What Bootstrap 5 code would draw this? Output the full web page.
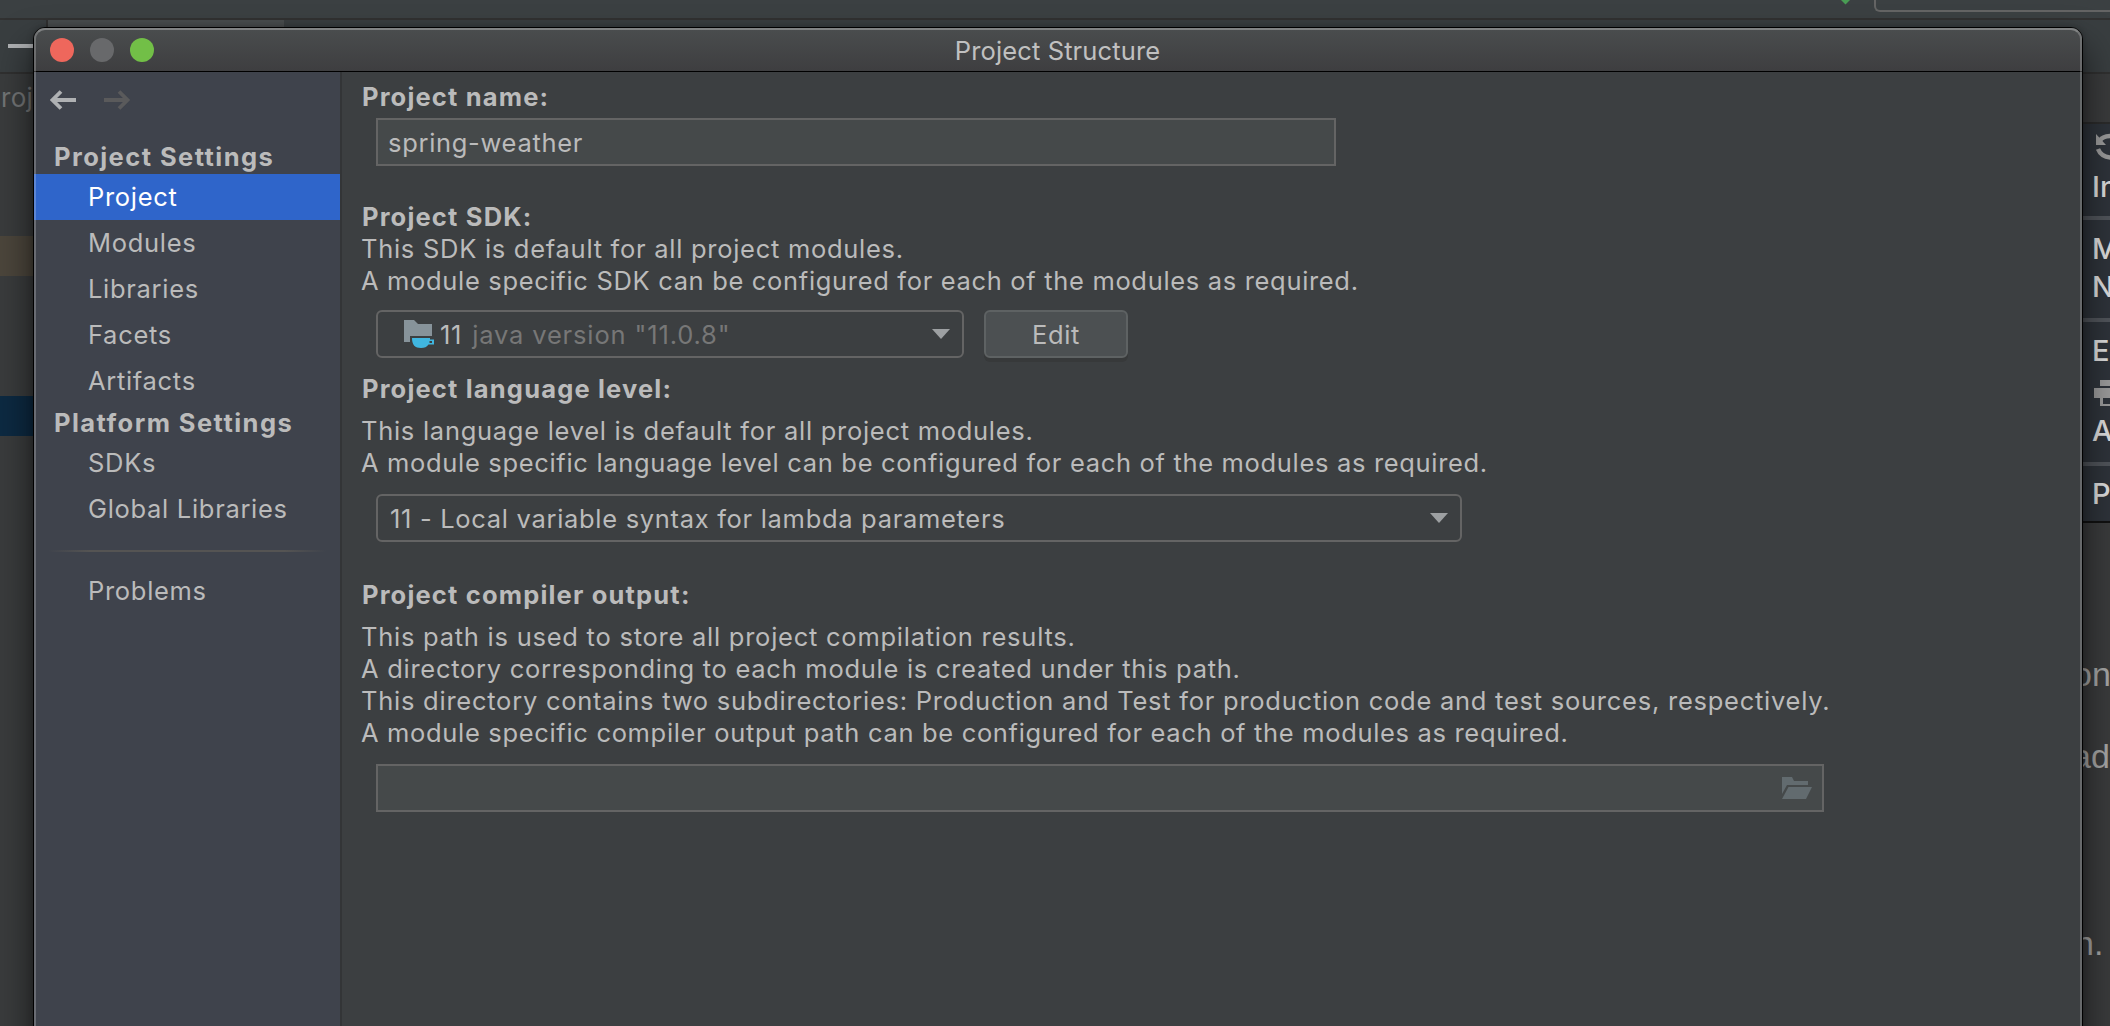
<!DOCTYPE html>
<html lang="en" data-bs-theme="dark">
<head>
<meta charset="utf-8">
<title>Project Structure</title>
<link href="https://cdn.jsdelivr.net/npm/bootstrap@5.3.0/dist/css/bootstrap.min.css" rel="stylesheet">
<style>
body{width:2110px;height:1026px;overflow:hidden;background:#3a3d3e;color:#bbb;font-family:Inter,"Liberation Sans",sans-serif;font-size:25.5px;line-height:32px;letter-spacing:.69px}
svg{display:block;flex:none}
/* IDE behind the dialog */
.ide{height:1026px}
.ide-tools{height:20px;background:#3b4042;border-bottom:2px solid #313131}
.ide-tools .run-tip{margin-left:1841px}
.ide-tools .run-box{width:260px;height:12px;margin-left:24px;border:2px solid #646464;border-top:0;border-right:0;border-radius:0 0 0 6px}
.ide-tabs{height:54px;background:#393e40;border-bottom:2px solid #303030}
.ide-tabs .first{width:46px;padding:24px 0 0 8px}
.ide-tabs .first i{display:block;width:26px;height:4px;background:#afb1b3}
.ide-tabs .tab-open{width:238px;background:#484c4d;border-left:2px solid #303030}
.strip-l{width:60px;background:#3a3c3d}
.tree-title{height:162px;padding:8px 0 0 1px;color:#737576;letter-spacing:.3px;font-size:26px}
.mod{height:40px;background:#4c463c}
.gap-rows{height:120px}
.sel{height:40px;background:#0d2a42}
.strip-r{width:60px;background:#3a3b3c}
.popup{height:401px;margin-top:48px;background:#2e333a;border-top:2px solid #2b2b2b;border-bottom:2px solid #111;color:#dcdcdc;font-size:29px;letter-spacing:0;padding-left:42px;font-weight:500}
.popup hr{margin:0 0 0 -42px;border:0;height:4px;background:#50545a;opacity:1;flex:none}
.popup div{height:48px;line-height:38px;flex:none}
.popup .r2{line-height:57px}
.popup .r3{height:50px;line-height:37px}
.popup .r4{height:52px;line-height:57px}
.popup .r5{height:54px;line-height:46px}
.popup .r6{height:52px;line-height:55px}
.doc{color:#a6a6a6;font-family:"Liberation Sans",sans-serif;font-size:34px;letter-spacing:0;padding-top:131px}
.doc div{height:82px;line-height:40px}
/* dialog */
.dialog-win{left:33px;top:27px;width:2050px;height:1040px;border:1px solid #000;border-radius:12px 12px 0 0;background:#3c3f41;box-shadow:0 22px 34px 4px rgba(0,0,0,.5),0 0 6px rgba(0,0,0,.25)}
.dialog-win::after{content:"";position:absolute;inset:0;border:2px solid rgba(255,255,255,.22);border-top-color:rgba(255,255,255,.3);border-radius:11px 11px 0 0;pointer-events:none}
.title-row{height:44px;border-bottom:1px solid #000;background:linear-gradient(#4a4d4e,#3e3e40);border-radius:11px 11px 0 0;padding:2px 1px 0 0;letter-spacing:.12px;color:#c0c0c0}
.lights{left:16px;top:10px;gap:16px}
.lights i{width:24px;height:24px;border-radius:50%}
.side{width:308px;background:#3f434c;border-right:2px solid #333537}
.nav-arrows{height:66px;padding:18px 0 0 16px;gap:27px}
.side-head{height:36px;line-height:37px;padding-left:20px;font-weight:700;letter-spacing:1.44px}
.side-item{height:46px;line-height:46px;padding-left:54px}
.side-item.on{background:#2f65ca;color:#fff}
.side-sep{height:2px;margin:18px 14px 16px;background:linear-gradient(90deg,transparent,#555453 15%,#555453 85%,transparent)}
.main-col{padding:9px 0 0 19px}
.head-b{font-weight:700;letter-spacing:1.17px;padding-left:1px}
.ls-a{letter-spacing:.67px}
.ls-t{letter-spacing:.72px}
.ls-w{letter-spacing:.75px}
.box-f{height:48px;margin-left:15px;border:2px solid #646464;line-height:46px}
.box-f span{padding-top:1px}
.box-in{background:#45494a}
.box-c{border-radius:6px}
.edit-b{width:144px;height:48px;margin-left:20px;border:2px solid #5e6263;border-radius:6px;background:#4c5052;line-height:46px;box-shadow:0 4px 0 #37393a}
</style>
<script src="https://cdn.jsdelivr.net/npm/bootstrap@5.3.0/dist/js/bootstrap.bundle.min.js"></script>
</head>
<body>
<div class="ide d-flex flex-column">
  <div class="ide-tools d-flex align-items-start">
    <svg class="run-tip" width="9" height="5"><path d="M0 0H9L4.500 4.500Z" fill="#499c54"/></svg>
    <div class="run-box"></div>
  </div>
  <div class="ide-tabs d-flex"><div class="first"><i></i></div><div class="tab-open"></div></div>
  <div class="d-flex flex-grow-1 justify-content-between overflow-hidden">
    <div class="strip-l overflow-hidden text-nowrap">
      <div class="tree-title">roj</div>
      <div class="mod"></div>
      <div class="gap-rows"></div>
      <div class="sel"></div>
    </div>
    <div class="strip-r">
      <div class="popup d-flex flex-column text-nowrap overflow-hidden">
        <svg width="29" height="44" viewBox="0 0 29 44"><path d="M8 16.500C10 13 14 12 20 12M6 25C8 30 12 33.500 20 33.500" fill="none" stroke="#9a9a9a" stroke-width="4.500"/><path d="M4 10V21H14Z" fill="#9a9a9a"/></svg>
        <div class="r1">In</div>
        <hr>
        <div class="r2">M</div><div class="r3">N</div>
        <hr>
        <div class="r4">E</div>
        <svg width="29" height="34" viewBox="0 0 29 34"><path d="M8 6H29V12H8ZM2 14H29V24H2ZM8 24H11V30H29V32H8Z" fill="#9a9a9a"/></svg>
        <div class="r5">A</div>
        <hr>
        <div class="r6">P</div>
      </div>
      <div class="doc text-nowrap overflow-hidden">
        <div style="padding-left:23px">on</div><div style="height:188px;padding-left:22px">ad</div><div style="padding-left:25px;line-height:38px">n.</div>
      </div>
    </div>
  </div>
</div>

<div class="dialog-win position-absolute d-flex flex-column">
  <div class="title-row position-relative d-flex align-items-center justify-content-center flex-shrink-0">
    <div class="lights position-absolute d-flex"><i style="background:#ee675c"></i><i style="background:#68696b"></i><i style="background:#72bf47"></i></div>
    Project Structure
  </div>
  <div class="d-flex flex-grow-1">
    <nav class="side flex-shrink-0">
      <div class="nav-arrows d-flex">
        <svg width="27" height="20" viewBox="0 0 27 20"><path d="M2 10H26M11 1.500L2.500 10L11 18.500" fill="none" stroke="#afb1b3" stroke-width="3.800"/></svg>
        <svg width="27" height="20" viewBox="0 0 27 20"><path d="M0 10H24M15 1.500L23.500 10L15 18.500" fill="none" stroke="#5a5a5b" stroke-width="3.800"/></svg>
      </div>
      <div class="side-head">Project Settings</div>
      <div class="side-item on">Project</div>
      <div class="side-item">Modules</div>
      <div class="side-item">Libraries</div>
      <div class="side-item">Facets</div>
      <div class="side-item">Artifacts</div>
      <div class="side-head">Platform Settings</div>
      <div class="side-item">SDKs</div>
      <div class="side-item">Global Libraries</div>
      <div class="side-sep"></div>
      <div class="side-item">Problems</div>
    </nav>
    <main class="main-col flex-grow-1 text-nowrap">
      <div class="head-b">Project name:</div>
      <div class="box-f box-in" style="width:960px;margin-top:5px;padding-left:10px">spring-weather</div>

      <div class="head-b" style="margin-top:35px">Project SDK:</div>
      <div class="ls-t">This SDK is default for all project modules.</div>
      <div class="ls-a">A module specific SDK can be configured for each of the modules as required.</div>
      <div class="d-flex" style="margin-top:13px">
        <div class="box-f box-c d-flex align-items-center" style="width:588px;padding:0 12px 0 26px">
          <svg width="32" height="30" viewBox="0 0 32 30"><path d="M0 1H10L14 5H28V17H6V23H0Z" fill="#87939a"/><path d="M8 19H26V20.500H30V25.500H24.500C23 28 20.500 29 17 29C11 29 8 26 8 19ZM25.500 22V24H28V22Z" fill="#40b6e0" fill-rule="evenodd"/></svg>
          <span style="margin-left:4px;margin-right:10px">11</span><span style="color:#777;letter-spacing:.85px">java version "11.0.8"</span>
          <svg class="ms-auto" width="18" height="10"><path d="M0 0H18L9 10Z" fill="#9da0a2"/></svg>
        </div>
        <div class="edit-b text-center">Edit</div>
      </div>

      <div class="head-b" style="margin-top:15px">Project language level:</div>
      <div class="ls-t" style="margin-top:10px">This language level is default for all project modules.</div>
      <div class="ls-a">A module specific language level can be configured for each of the modules as required.</div>
      <div class="box-f box-c d-flex align-items-center" style="width:1086px;margin-top:15px;padding:0 12px">
        <span>11 - Local variable syntax for lambda parameters</span>
        <svg class="ms-auto" width="18" height="10"><path d="M0 0H18L9 10Z" fill="#9da0a2"/></svg>
      </div>

      <div class="head-b" style="margin-top:37px">Project compiler output:</div>
      <div class="ls-w" style="margin-top:10px">This path is used to store all project compilation results.</div>
      <div class="ls-t">A directory corresponding to each module is created under this path.</div>
      <div class="ls-w">This directory contains two subdirectories: Production and Test for production code and test sources, respectively.</div>
      <div class="ls-a">A module specific compiler output path can be configured for each of the modules as required.</div>
      <div class="box-f box-in d-flex align-items-center justify-content-end" style="width:1448px;margin-top:15px;padding-right:10px">
        <svg width="30" height="24" viewBox="0 0 30 24"><path d="M0 1H10L12 5H26V9H5L0 18Z" fill="#626b6f"/><path d="M6.500 11H30L24 23H0Z" fill="#626b6f"/></svg>
      </div>
    </main>
  </div>
</div>
</body>
</html>
